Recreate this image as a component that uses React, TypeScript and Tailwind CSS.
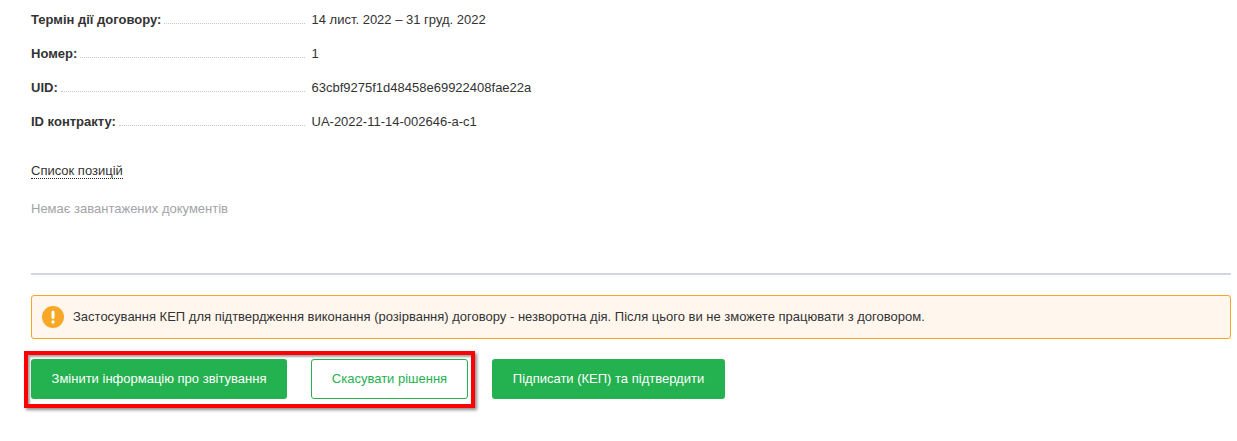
export default function App() {
  const rows = [
    ["Термін дії договору:", "14 лист. 2022 – 31 груд. 2022"],
    ["Номер:", "1"],
    ["UID:", "63cbf9275f1d48458e69922408fae22a"],
    ["ID контракту:", "UA-2022-11-14-002646-a-c1"],
  ];
  return (
    <div className="relative h-[441px] w-[1237px] overflow-hidden bg-white font-['Liberation_Sans',Arial,sans-serif] text-[13px] text-[#333333]">
      <div className="flex flex-col px-[31px] pt-[3px]">
        <div className="flex flex-col">
          {rows.map(([k, v]) => (
            <div key={k} className="flex h-[34px] items-center">
              <div className="flex w-[274px] items-center">
                <span className="font-bold whitespace-nowrap">{k}</span>
                <span className="ml-[3px] mt-[6px] flex-1 border-b border-dotted border-[#c4c6d0]" />
              </div>
              <span className="ml-[6.5px] whitespace-nowrap">{v}</span>
            </div>
          ))}
        </div>
        <div className="mt-[24px] flex">
          <span className="border-b border-dotted border-[#222222] leading-[15px]">Список позицій</span>
        </div>
        <div className="mt-[22px] leading-[15px] text-[#a3a3a8]">Немає завантажених документів</div>
        <div className="mt-[57px] h-[2px] w-[1200px] bg-[#d3d5e2]" />
        <div className="mt-[20px] flex h-[44px] w-[1200px] items-center rounded-[3px] border border-[#f5a623] bg-[#fff7ee] pl-[10px]">
          <svg width="22" height="22" viewBox="0 0 22 22" className="shrink-0">
            <circle cx="11" cy="11" r="11" fill="#f9a825" />
            <rect x="9.5" y="4.5" width="3" height="8.5" rx="1.5" fill="#fff" />
            <circle cx="11" cy="16" r="1.7" fill="#fff" />
          </svg>
          <span className="ml-[9px] whitespace-nowrap">
            Застосування КЕП для підтвердження виконання (розірвання) договору - незворотна дія. Після цього ви не зможете працювати з договором.
          </span>
        </div>
        <div className="mt-[20px] flex gap-[24px]">
          <button className="h-[40px] w-[256px] rounded-[3px] bg-[#24b14f] text-white">Змінити інформацію про звітування</button>
          <button className="h-[40px] w-[157px] rounded-[3px] border border-[#24b14f] bg-white text-[#24b14f]">Скасувати рішення</button>
          <button className="h-[40px] w-[233px] rounded-[3px] bg-[#24b14f] text-white">Підписати (КЕП) та підтвердити</button>
        </div>
      </div>
      <div className="pointer-events-none absolute left-[24px] top-[351px] h-[57px] w-[451px] border-[4px] border-[#ff0000] shadow-[2px_2px_3px_rgba(0,0,0,0.45),inset_2px_2px_2px_rgba(0,0,0,0.35)]" />
    </div>
  );
}
